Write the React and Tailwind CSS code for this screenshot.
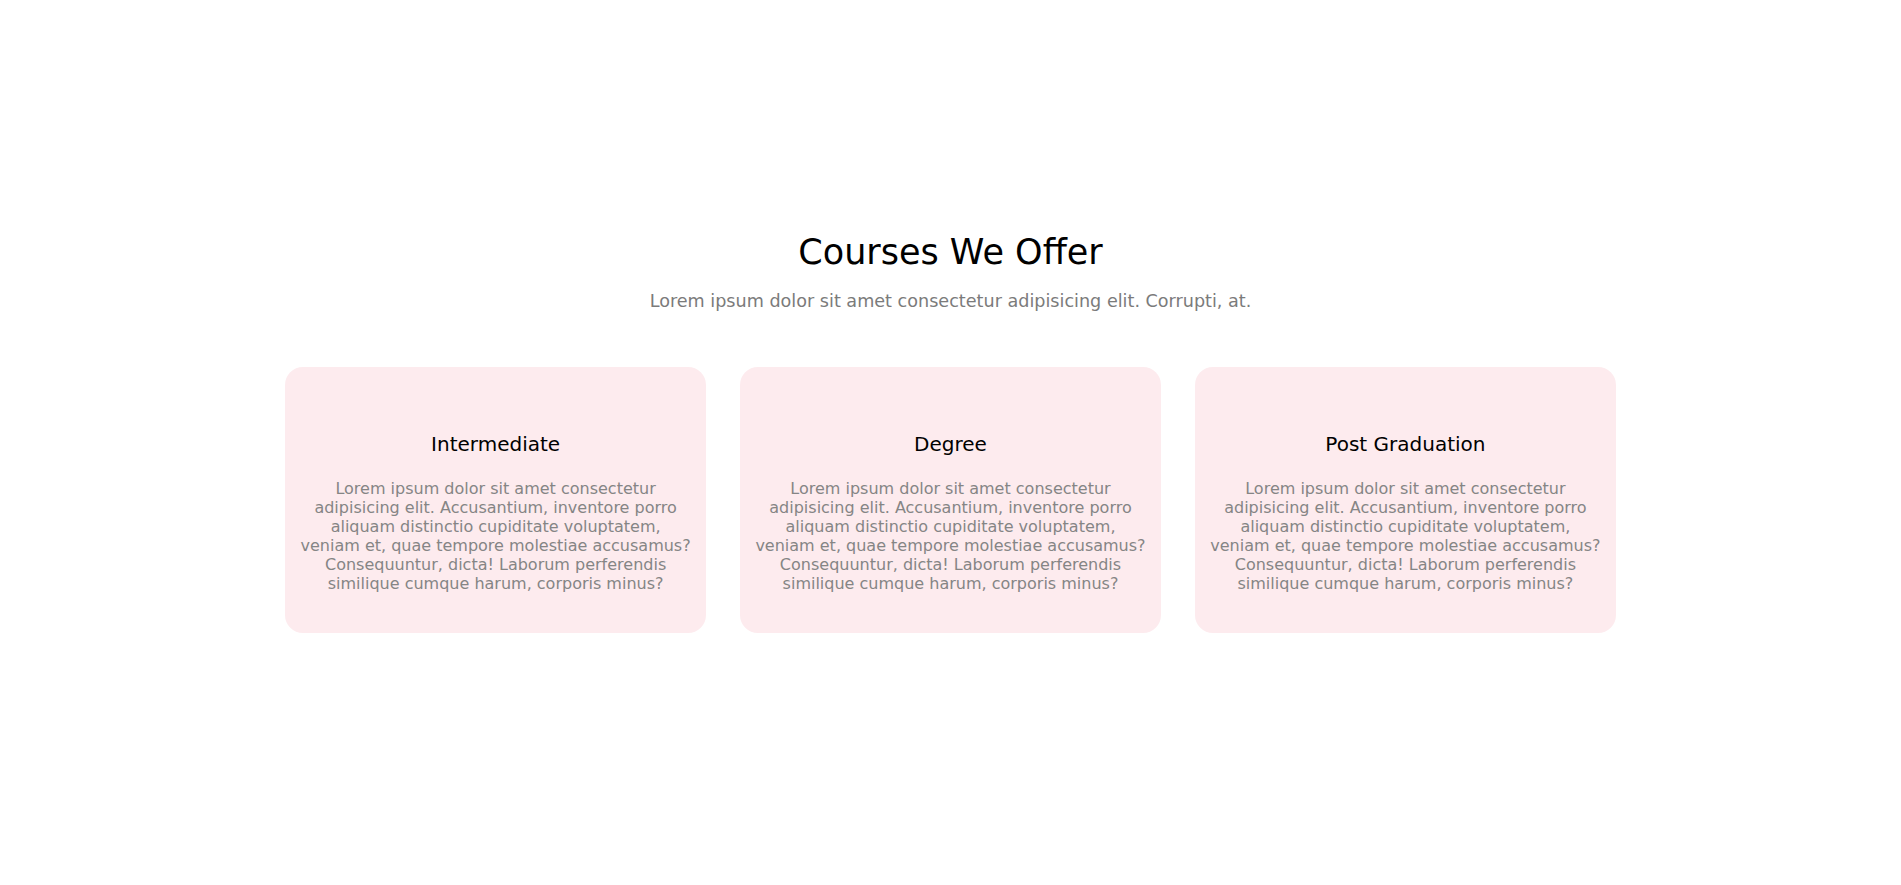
const courses = [
  { title: 'Intermediate' },
  { title: 'Degree' },
  { title: 'Post Graduation' },
];

const blurb =
  'Lorem ipsum dolor sit amet consectetur adipisicing elit. Accusantium, inventore porro aliquam distinctio cupiditate voluptatem, veniam et, quae tempore molestiae accusamus? Consequuntur, dicta! Laborum perferendis similique cumque harum, corporis minus?';

export default function App() {
  return (
    <div className="min-h-screen bg-white font-['DejaVu_Sans',sans-serif] pt-[231px]">
      <section className="w-[70%] mx-auto text-center">
        {/* Heading */}
        <h1 className="text-[35px] leading-[42px] text-black">Courses We Offer</h1>
        <p className="mt-4 text-[17.6px] leading-[24px] text-[#7b7b7b]">
          Lorem ipsum dolor sit amet consectetur adipisicing elit. Corrupti, at.
        </p>

        {/* Cards */}
        <div className="mt-[54px] grid grid-cols-3 gap-[34px]">
          {courses.map((c) => (
            <div key={c.title} className="bg-[#fdebee] rounded-[18px] px-[14px] pt-[65px] pb-[40px]">
              <h3 className="text-[20px] leading-[24px] text-black">{c.title}</h3>
              <p className="mt-[23px] text-[16px] leading-[19px] text-[#858585]">{blurb}</p>
            </div>
          ))}
        </div>
      </section>
    </div>
  );
}
